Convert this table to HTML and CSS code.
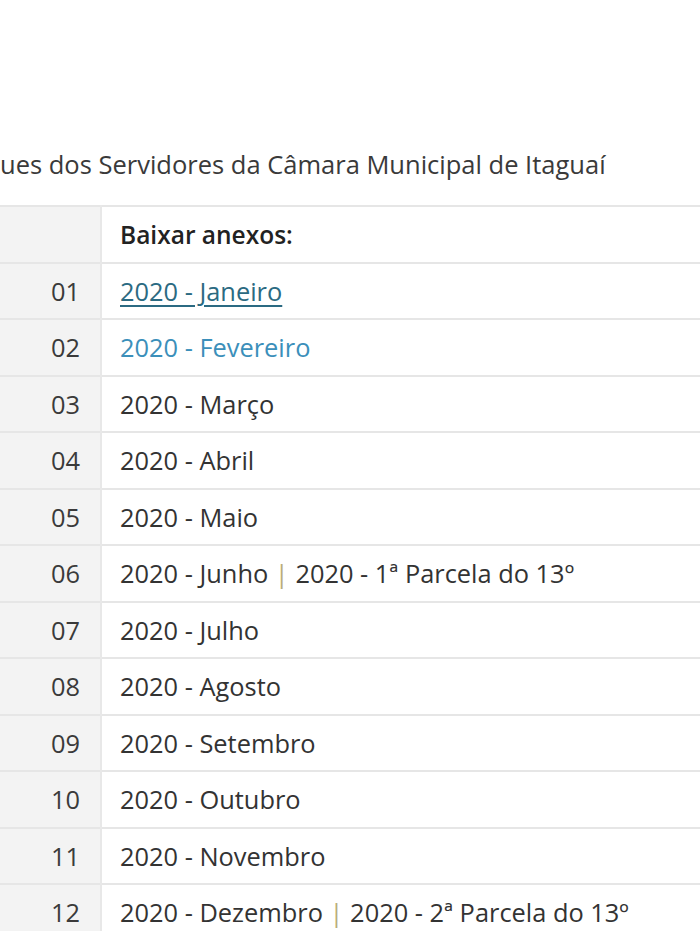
FILE: index.html
```html
<!DOCTYPE html>
<html lang="pt-BR">
<head>
<meta charset="utf-8">
<link rel="stylesheet" href="styles.css">
</head>
<body>
<div class="page">
  <p class="title">ues dos Servidores da Câmara Municipal de Itaguaí</p>
  <table class="tbl">
    <thead>
      <tr><th class="num"></th><th class="doc">Baixar anexos:</th></tr>
    </thead>
    <tbody>
      <tr><td class="num">01</td><td class="doc"><a class="link visited" href="#">2020 - Janeiro</a></td></tr>
      <tr><td class="num">02</td><td class="doc"><a class="link" href="#">2020 - Fevereiro</a></td></tr>
      <tr><td class="num">03</td><td class="doc">2020 - Março</td></tr>
      <tr><td class="num">04</td><td class="doc">2020 - Abril</td></tr>
      <tr><td class="num">05</td><td class="doc">2020 - Maio</td></tr>
      <tr><td class="num">06</td><td class="doc">2020 - Junho <span class="sep">|</span> 2020 - 1ª Parcela do 13º</td></tr>
      <tr><td class="num">07</td><td class="doc">2020 - Julho</td></tr>
      <tr><td class="num">08</td><td class="doc">2020 - Agosto</td></tr>
      <tr><td class="num">09</td><td class="doc">2020 - Setembro</td></tr>
      <tr><td class="num">10</td><td class="doc">2020 - Outubro</td></tr>
      <tr><td class="num">11</td><td class="doc">2020 - Novembro</td></tr>
      <tr><td class="num">12</td><td class="doc">2020 - Dezembro <span class="sep">|</span> 2020 - 2ª Parcela do 13º</td></tr>
    </tbody>
  </table>
</div>
</body>
</html>
```
FILE: styles.css
```css
html, body {
  margin: 0;
  padding: 0;
  background: #fff;
  overflow: hidden;
}
.page {
  width: 700px;
  height: 931px;
  overflow: hidden;
  font-family: "Open Sans", "Noto Sans", sans-serif;
  color: #333;
}
.title {
  margin: 0;
  padding: 146px 0 0 0;
  font-size: 25.5px;
  line-height: 36px;
  height: 59px;
  box-sizing: content-box;
  color: #3a3a3a;
  white-space: nowrap;
}
.tbl {
  border-collapse: collapse;
  width: 760px;
  font-size: 25.4px;
}
.tbl th, .tbl td {
  border-top: 2px solid #e6e6e6;
  height: 54.5px;
  padding: 0;
  white-space: nowrap;
}
.tbl .num {
  width: 101px;
  background: #f3f3f3;
  text-align: right;
  padding-right: 20px;
  border-right: 2px solid #e8e8e8;
  color: #3a3a3a;
  box-sizing: border-box;
}
.tbl .doc {
  text-align: left;
  padding-left: 18px;
  color: #333;
}
.tbl th.doc {
  font-weight: 600;
  color: #222;
  font-size: 24.5px;
}
.link {
  color: #3b8fba;
  text-decoration: none;
}
.link.visited {
  color: #2b6a82;
  text-decoration: underline;
  text-underline-offset: 4px;
}
.sep {
  color: #b9ad78;
}
```
